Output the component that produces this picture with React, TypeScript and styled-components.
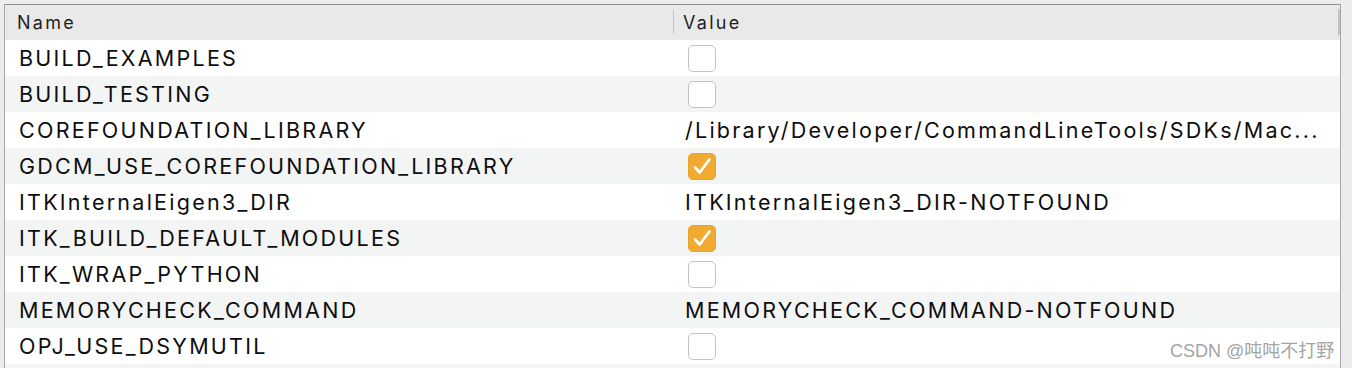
import React from "react";
import styled, { createGlobalStyle } from "styled-components";

const GlobalStyle = createGlobalStyle`
  html, body {
    margin: 0;
    padding: 0;
    background: #ececec;
    font-family: Inter, "Liberation Sans", Arial, sans-serif;
  }
`;

const Frame = styled.div`
  position: relative;
  margin: 4px 0 0 4px;
  width: 1335px;
  height: 363px;
  overflow: hidden;
  border-top: 1px solid #8f8f8f;
  border-left: 1px solid #a8a8a8;
  border-right: 1px solid #a8a8a8;
  background: #ffffff;
`;

const HeaderRow = styled.div`
  position: relative;
  display: grid;
  grid-template-columns: 668px 1fr;
  height: 35px;
  background: #e9e9e9;
`;

const HeaderCell = styled.div<{ $divider?: boolean }>`
  position: relative;
  display: flex;
  align-items: center;
  padding-left: ${(p) => (p.$divider ? "10px" : "12px")};
  font-size: 18px;
  letter-spacing: 2.3px;
  color: #1f1f1f;
  &::before {
    content: "";
    display: ${(p) => (p.$divider ? "block" : "none")};
    position: absolute;
    left: 0;
    top: 5px;
    bottom: 6px;
    width: 1px;
    background: #c4c4c4;
  }
`;

const ScrollThumb = styled.div`
  position: absolute;
  right: 0;
  top: 4px;
  width: 2px;
  height: 26px;
  background: #c2c2c2;
`;

const Row = styled.div<{ $alt: boolean }>`
  display: grid;
  grid-template-columns: 668px 1fr;
  height: 36px;
  background: ${(p) => (p.$alt ? "#f3f4f4" : "#ffffff")};
`;

const Cell = styled.div<{ $value?: boolean }>`
  display: flex;
  align-items: center;
  min-width: 0;
  padding-left: ${(p) => (p.$value ? "12px" : "14px")};
  padding-right: 6px;
  font-size: 21.5px;
  letter-spacing: 2.25px;
  color: #0d0d0d;
  white-space: nowrap;
  overflow: hidden;
`;

const CellText = styled.span`
  overflow: hidden;
  text-overflow: ellipsis;
`;

const Box = styled.span<{ $checked: boolean }>`
  box-sizing: border-box;
  display: flex;
  align-items: center;
  justify-content: center;
  width: 28px;
  height: 27px;
  margin-left: 3px;
  border-radius: 5px;
  background: ${(p) => (p.$checked ? "#f0aa30" : "#ffffff")};
  border: 1px solid ${(p) => (p.$checked ? "#e9a128" : "#c3c3c3")};
`;

const Watermark = styled.div`
  position: absolute;
  left: 1165px;
  top: 331px;
  font-family: "Liberation Sans", "Noto Sans CJK SC", sans-serif;
  font-size: 18px;
  letter-spacing: 0;
  color: #a4a4a4;
  white-space: nowrap;
`;

const CheckMark = () => (
  <svg width="28" height="27" viewBox="0 0 28 27">
    <path
      d="M6.5 14.5 L11.5 20 L22 6"
      fill="none"
      stroke="#ffffff"
      strokeWidth="3"
      strokeLinecap="round"
      strokeLinejoin="round"
    />
  </svg>
);

const Checkbox = ({ checked }: { checked: boolean }) => (
  <Box $checked={checked}>{checked ? <CheckMark /> : null}</Box>
);

type Entry = { name: string; value: string | boolean };

const entries: Entry[] = [
  { name: "BUILD_EXAMPLES", value: false },
  { name: "BUILD_TESTING", value: false },
  { name: "COREFOUNDATION_LIBRARY", value: "/Library/Developer/CommandLineTools/SDKs/Mac..." },
  { name: "GDCM_USE_COREFOUNDATION_LIBRARY", value: true },
  { name: "ITKInternalEigen3_DIR", value: "ITKInternalEigen3_DIR-NOTFOUND" },
  { name: "ITK_BUILD_DEFAULT_MODULES", value: true },
  { name: "ITK_WRAP_PYTHON", value: false },
  { name: "MEMORYCHECK_COMMAND", value: "MEMORYCHECK_COMMAND-NOTFOUND" },
  { name: "OPJ_USE_DSYMUTIL", value: false },
  { name: "", value: "" },
];

export default function App() {
  return (
    <>
      <GlobalStyle />
      <Frame>
        <HeaderRow>
          <HeaderCell>Name</HeaderCell>
          <HeaderCell $divider>Value</HeaderCell>
          <ScrollThumb />
        </HeaderRow>
        {entries.map((e, i) => (
          <Row key={i} $alt={i % 2 === 1}>
            <Cell>
              <CellText>{e.name}</CellText>
            </Cell>
            <Cell $value>
              {typeof e.value === "boolean" ? (
                <Checkbox checked={e.value} />
              ) : (
                <CellText>{e.value}</CellText>
              )}
            </Cell>
          </Row>
        ))}
        <Watermark>CSDN @吨吨不打野</Watermark>
      </Frame>
    </>
  );
}
